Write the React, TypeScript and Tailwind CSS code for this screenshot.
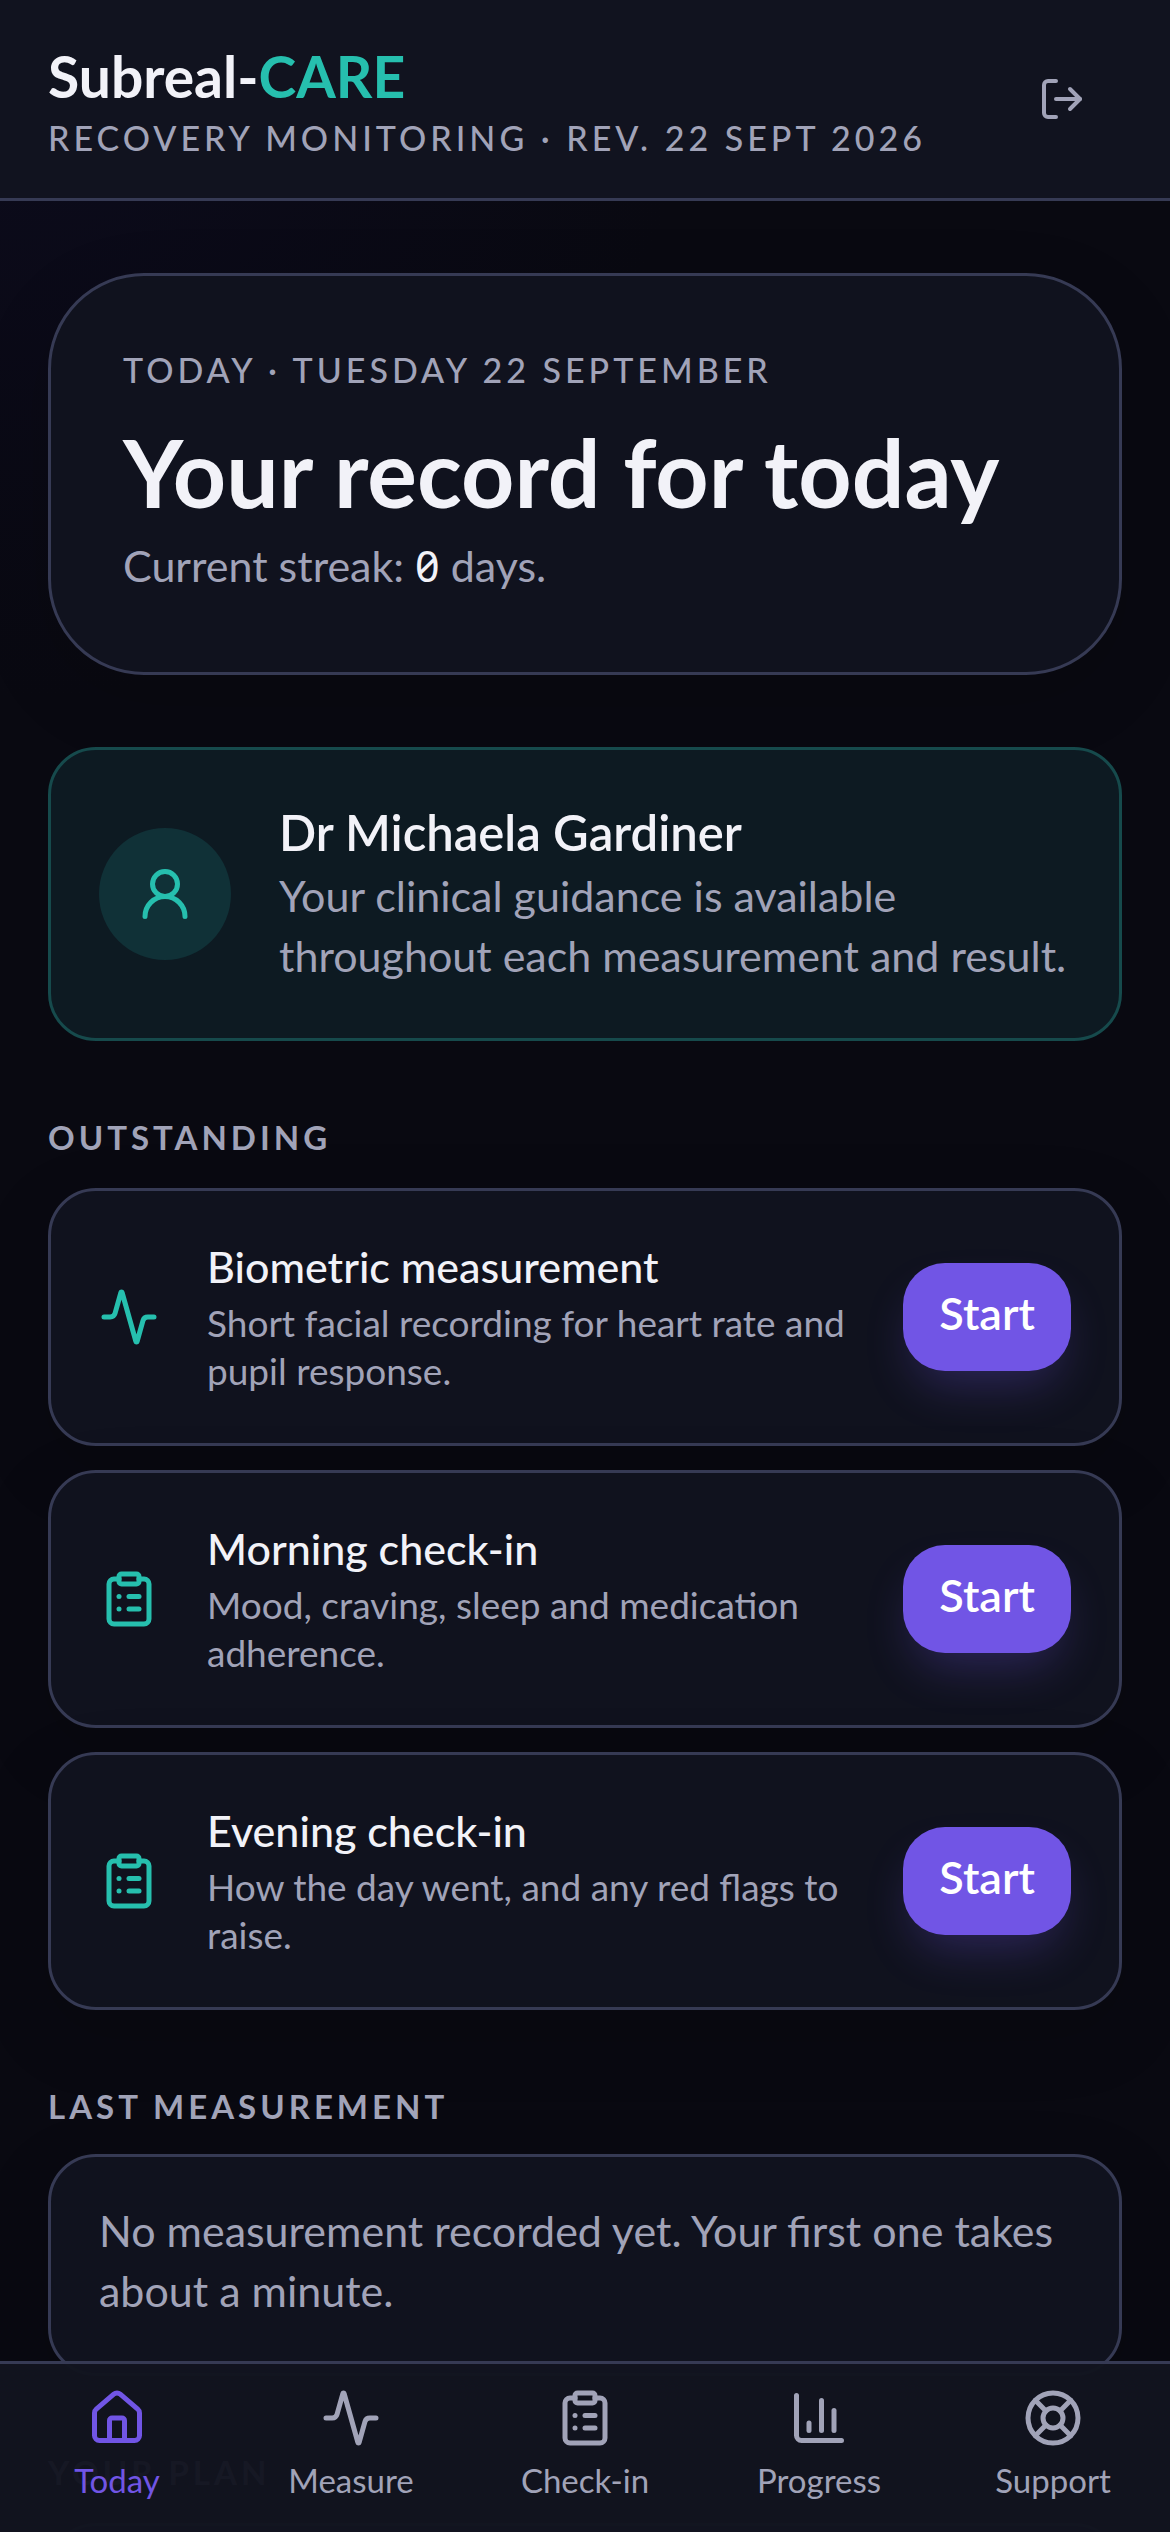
import { useState } from 'react'
import {
  Activity,
  ChartColumn,
  ClipboardList,
  House,
  LifeBuoy,
  LogOut,
  UserRound,
  type LucideIcon,
} from 'lucide-react'
import { clsx } from 'clsx'

type Task = {
  id: string
  title: string
  description: string
  icon: LucideIcon
}

const TASKS: Task[] = [
  {
    id: 'biometric',
    title: 'Biometric measurement',
    description: 'Short facial recording for heart rate and pupil response.',
    icon: Activity,
  },
  {
    id: 'morning',
    title: 'Morning check-in',
    description: 'Mood, craving, sleep and medication adherence.',
    icon: ClipboardList,
  },
  {
    id: 'evening',
    title: 'Evening check-in',
    description: 'How the day went, and any red flags to raise.',
    icon: ClipboardList,
  },
]

const TABS: Array<{ id: string; label: string; icon: LucideIcon }> = [
  { id: 'today', label: 'Today', icon: House },
  { id: 'measure', label: 'Measure', icon: Activity },
  { id: 'check-in', label: 'Check-in', icon: ClipboardList },
  { id: 'progress', label: 'Progress', icon: ChartColumn },
  { id: 'support', label: 'Support', icon: LifeBuoy },
]

const CARD = 'border-[3px] border-[#363a54] bg-[#10121e] shadow-[0_24px_72px_rgba(0,0,0,0.15)]'

function Header() {
  return (
    <header className="flex shrink-0 items-center justify-between border-b-[3px] border-[#363a54] bg-[#11131f] px-12 py-9">
      <div>
        <p className="text-[57px] leading-[80px] font-bold text-[#f2f2f8]">
          Subreal-<span className="text-[#26bfae]">CARE</span>
        </p>
        <p className="pb-0.5 text-[34px] leading-[44px] font-medium tracking-[4px] uppercase">
          Recovery monitoring · Rev. 22 Sept 2026
        </p>
      </div>
      <button type="button" aria-label="Sign out" className="flex size-30 items-center justify-center">
        <LogOut className="size-12" aria-hidden="true" />
      </button>
    </header>
  )
}

function SectionTitle({ children }: { children: string }) {
  return (
    <h2 className="text-[33px] leading-[48px] font-bold tracking-[4px] uppercase">{children}</h2>
  )
}

function TaskCard({ task }: { task: Task }) {
  const Icon = task.icon
  return (
    <li className={clsx(CARD, 'flex items-center gap-12 rounded-[48px] p-12')}>
      <Icon className="size-15 shrink-0 text-[#26bfae]" aria-hidden="true" />
      <div className="min-w-0 flex-1">
        <h3 className="pb-1 text-[43px] leading-[56px] font-medium text-[#f2f2f8]">{task.title}</h3>
        <p className="text-[37px] leading-[48px]">{task.description}</p>
      </div>
      <button
        type="button"
        aria-label={`Start ${task.title}`}
        className="h-27 shrink-0 rounded-[42px] bg-[#7155e5] px-9 pb-1.5 text-[45px] font-semibold text-white shadow-[0_24px_48px_-12px_rgba(113,85,229,0.3)]"
      >
        Start
      </button>
    </li>
  )
}

export default function App() {
  const [activeTab, setActiveTab] = useState('today')

  return (
    <div className="relative flex h-dvh flex-col overflow-hidden bg-[#090911] bg-[radial-gradient(circle_at_top_left,#0c0b1d,#090911_700px)] font-['Lato',sans-serif] text-[#a1a3b8]">
      <Header />

      <main className="min-h-0 flex-1 overflow-hidden px-12 pt-18">
        <section className={clsx(CARD, 'rounded-[96px] p-18')}>
          <p className="text-[34px] leading-[44px] font-medium tracking-[4px] uppercase">
            Today · Tuesday 22 September
          </p>
          <h1 className="mt-6 mb-2 text-[93px] leading-[112px] font-bold text-[#f2f2f8]">
            Your record for today
          </h1>
          <p className="pb-1 text-[43px] leading-[60px]">
            Current streak:{' '}
            <span className="font-['Noto_Sans',sans-serif] text-[#f2f2f8] slashed-zero">0</span> days.
          </p>
        </section>

        {/* Clinician */}
        <section className="mt-18 flex items-center gap-12 rounded-[48px] border-[3px] border-[#164a4c] bg-[#0d1a22] p-12">
          <div className="flex size-33 shrink-0 items-center justify-center rounded-full bg-[#103137] text-[#26bfae]">
            <UserRound className="size-15" aria-hidden="true" />
          </div>
          <div className="min-w-0 flex-1 pb-1">
            <h2 className="text-[49px] leading-[68px] font-semibold text-[#f2f2f8]">Dr Michaela Gardiner</h2>
            <p className="text-[43px] leading-[60px]">
              Your clinical guidance is available throughout each measurement and result.
            </p>
          </div>
        </section>

        <section className="mt-18">
          <SectionTitle>Outstanding</SectionTitle>
          <ul className="mt-[27px] flex flex-col gap-6">
            {TASKS.map((task) => (
              <TaskCard key={task.id} task={task} />
            ))}
          </ul>
        </section>

        <section className="mt-18">
          <SectionTitle>Last measurement</SectionTitle>
          <div className={clsx(CARD, 'mt-6 rounded-[48px] px-12 pt-11 pb-13')}>
            <p className="text-[43px] leading-[60px]">
              No measurement recorded yet. Your first one takes about a minute.
            </p>
          </div>
        </section>

        <section className="mt-18">
          <SectionTitle>Your plan</SectionTitle>
          <div className={clsx(CARD, 'mt-[27px] h-60 rounded-[48px]')} />
        </section>
      </main>

      <nav className="absolute inset-x-0 bottom-0 grid grid-cols-5 border-t-[3px] border-[#363a54] bg-[#12141f]/97 pt-6 pb-7">
        {TABS.map(({ id, label, icon: Icon }) => (
          <button
            key={id}
            type="button"
            onClick={() => setActiveTab(id)}
            aria-current={activeTab === id ? 'page' : undefined}
            className={clsx(
              'flex flex-col items-center gap-2 text-[33px] leading-[48px]',
              activeTab === id && 'text-[#7155e5]'
            )}
          >
            <Icon className="size-15" aria-hidden="true" />
            {label}
          </button>
        ))}
      </nav>
    </div>
  )
}
